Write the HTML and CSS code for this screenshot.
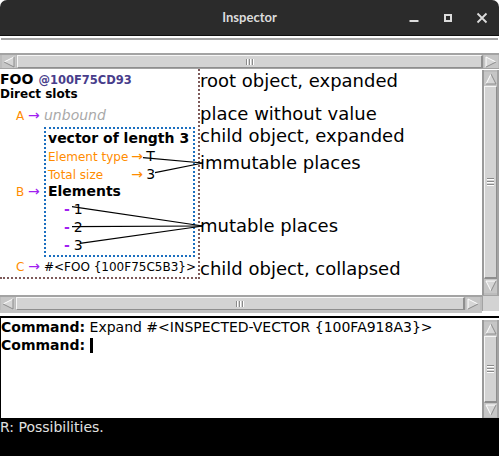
FILE: index.html
```html
<!DOCTYPE html>
<html>
<head>
<meta charset="utf-8">
<title>Inspector</title>
<link rel="stylesheet" href="styles.css">
</head>
<body>
<div class="window">
  <div class="titlebar">
    <div></div>
    <div class="title">Inspector</div>
    <div class="controls">
      <span class="wbtn"><svg width="12" height="12" viewBox="0 0 12 12"><rect x="1.5" y="8" width="9" height="2" fill="#dcdcdc"/></svg></span>
      <span class="wbtn"><svg width="12" height="12" viewBox="0 0 12 12"><rect x="3" y="3" width="6" height="6" fill="none" stroke="#dcdcdc" stroke-width="2"/></svg></span>
      <span class="wbtn"><svg width="12" height="12" viewBox="0 0 12 12"><path d="M1.5 1.5 L10.5 10.5 M10.5 1.5 L1.5 10.5" stroke="#dcdcdc" stroke-width="1.8"/></svg></span>
    </div>
  </div>

  <div class="topline"></div>

  <div class="hscroll hscroll-top">
    <div class="harrow"><svg width="12" height="12" viewBox="0 0 12 12"><polygon points="1,6 11,1 11,11" fill="#d6d6d6"/><path d="M1 6 L11 1" stroke="#fff"/><path d="M11 1 L11 11 L1 6" stroke="#8c8c8c" fill="none"/></svg></div>
    <div class="hthumb"><span class="grip-v"></span></div>
    <div class="harrow"><svg width="12" height="12" viewBox="0 0 12 12"><polygon points="11,6 1,1 1,11" fill="#d6d6d6"/><path d="M1 11 L1 1 L11 6" stroke="#fff" fill="none"/><path d="M11 6 L1 11" stroke="#8c8c8c"/></svg></div>
  </div>

  <div class="pane">
    <div class="canvas">
      <div class="root">
        <div class="obj-head"><span class="type">FOO</span> <span class="addr">@100F75CD93</span></div>
        <div class="section">Direct slots</div>
        <div class="slot slot-a">
          <span class="key">A <span class="arr">→</span></span>
          <span class="unbound">unbound</span>
        </div>
        <div class="slot slot-b">
          <span class="key">B <span class="arr">→</span></span>
          <div class="child">
            <div class="child-head">vector of length 3</div>
            <div class="props">
              <span class="pkey">Element type</span><span class="parr">→</span><span class="pval">T</span>
              <span class="pkey">Total size</span><span class="parr">→</span><span class="pval">3</span>
            </div>
            <div class="child-section">Elements</div>
            <div class="elem"><span class="dash">-</span><span class="ev">1</span></div>
            <div class="elem"><span class="dash">-</span><span class="ev">2</span></div>
            <div class="elem"><span class="dash">-</span><span class="ev">3</span></div>
          </div>
        </div>
        <div class="slot slot-c">
          <span class="key">C <span class="arr">→</span></span>
          <span class="collapsed">#&lt;FOO {100F75C5B3}&gt;</span>
        </div>
      </div>

      <div class="notes">
        <div class="note n1">root object, expanded</div>
        <div class="note n2">place without value</div>
        <div class="note n3">child object, expanded</div>
        <div class="note n4">immutable places</div>
        <div class="note n5">mutable places</div>
        <div class="note n6">child object, collapsed</div>
      </div>

      <svg class="leaders" width="482" height="226" viewBox="0 0 482 226">
        <g stroke="#000" stroke-width="1.2" fill="none">
          <line x1="143" y1="88.7" x2="203" y2="94"/>
          <line x1="155" y1="103.7" x2="203" y2="94"/>
          <line x1="72" y1="137.7" x2="203" y2="157"/>
          <line x1="72" y1="157.7" x2="203" y2="157"/>
          <line x1="80" y1="174.3" x2="203" y2="157"/>
        </g>
      </svg>
    </div>

    <div class="vscroll vscroll-top">
      <div class="varrow"><svg width="12" height="12" viewBox="0 0 12 12"><polygon points="6,1 11,11 1,11" fill="#d6d6d6"/><path d="M1 11 L6 1" stroke="#fff"/><path d="M6 1 L11 11 L1 11" stroke="#8c8c8c" fill="none"/></svg></div>
      <div class="vthumb"><span class="grip-h"></span></div>
      <div class="varrow"><svg width="12" height="12" viewBox="0 0 12 12"><polygon points="6,11 11,1 1,1" fill="#d6d6d6"/><path d="M6 11 L1 1 L11 1" stroke="#fff" fill="none"/><path d="M11 1 L6 11" stroke="#8c8c8c"/></svg></div>
    </div>
  </div>

  <div class="hrow">
    <div class="hscroll hscroll-bottom">
      <div class="harrow"><svg width="12" height="12" viewBox="0 0 12 12"><polygon points="1,6 11,1 11,11" fill="#d6d6d6"/><path d="M1 6 L11 1" stroke="#fff"/><path d="M11 1 L11 11 L1 6" stroke="#8c8c8c" fill="none"/></svg></div>
      <div class="hthumb"><span class="grip-v"></span></div>
      <div class="harrow"><svg width="12" height="12" viewBox="0 0 12 12"><polygon points="11,6 1,1 1,11" fill="#d6d6d6"/><path d="M1 11 L1 1 L11 6" stroke="#fff" fill="none"/><path d="M11 6 L1 11" stroke="#8c8c8c"/></svg></div>
    </div>
    <div class="corner"></div>
  </div>

  <div class="cmd">
    <div class="cmd-text">
      <div class="cmd-line"><b>Command:</b> Expand #&lt;INSPECTED-VECTOR {100FA918A3}&gt;</div>
      <div class="cmd-line"><b>Command:</b> <span class="cursor"></span></div>
    </div>
    <div class="vscroll vscroll-cmd">
      <div class="varrow"><svg width="12" height="12" viewBox="0 0 12 12"><polygon points="6,1 11,11 1,11" fill="#d6d6d6"/><path d="M1 11 L6 1" stroke="#fff"/><path d="M6 1 L11 11 L1 11" stroke="#8c8c8c" fill="none"/></svg></div>
      <div class="vthumb"><span class="grip-h"></span></div>
      <div class="varrow"><svg width="12" height="12" viewBox="0 0 12 12"><polygon points="6,11 11,1 1,1" fill="#d6d6d6"/><path d="M6 11 L1 1 L11 1" stroke="#fff" fill="none"/><path d="M11 1 L6 11" stroke="#8c8c8c"/></svg></div>
    </div>
  </div>

  <div class="status">R: Possibilities.</div>
</div>
</body>
</html>
```

FILE: styles.css
```css
html, body {
  margin: 0;
  padding: 0;
}
body {
  width: 499px;
  height: 456px;
  overflow: hidden;
  background: #ffffff;
  font-family: "DejaVu Sans", sans-serif;
  color: #000;
}
.window {
  width: 499px;
  height: 456px;
  display: flex;
  flex-direction: column;
}

/* title bar */
.titlebar {
  height: 36px;
  flex: none;
  box-sizing: border-box;
  background: #2b2b2b;
  border-bottom: 1px solid #111;
  border-radius: 7px 7px 0 0;
  display: grid;
  grid-template-columns: 1fr auto 1fr;
  align-items: center;
}
.title {
  font-family: Lato, "DejaVu Sans", sans-serif;
  font-weight: 700;
  font-size: 13px;
  color: #dcdcdc;
  padding-bottom: 1px;
}
.controls {
  justify-self: end;
  display: flex;
  padding-right: 0.5px;
}
.wbtn {
  width: 34px;
  height: 34px;
  display: flex;
  align-items: center;
  justify-content: center;
}

.topline {
  flex: none;
  height: 2px;
  background: #a3a3a3;
  margin: 2px 1px 13px 1px;
}

/* horizontal scrollbars */
.hscroll {
  flex: none;
  display: flex;
  height: 16px;
  box-sizing: border-box;
  background: #bcbcbc;
  border-top: 2px solid #a3a3a3;
  border-bottom: 1px solid #a3a3a3;
}
.hscroll-top {
  padding: 0 1px 0 2px;
}
.hscroll-bottom {
  width: 482px;
  height: 18px;
  border-bottom: 3px solid #c4c4c4;
  padding: 0 2px 0 1px;
}
.harrow {
  width: 14px;
  flex: none;
  display: flex;
  align-items: center;
  justify-content: center;
  background: #c6c6c6;
}
.hthumb {
  flex: 1;
  margin: 0 1px;
  background: #d3d3d3;
  border-top: 1px solid #f6f6f6;
  border-left: 1px solid #f6f6f6;
  border-right: 2px solid #8e8e8e;
  border-bottom: 1px solid #8e8e8e;
  display: flex;
  align-items: center;
  justify-content: center;
}
.grip-v {
  width: 8px;
  height: 6px;
  background: repeating-linear-gradient(90deg, #8a8a8a 0 1px, #ffffff 1px 2px, transparent 2px 3px);
}

/* top pane */
.pane {
  flex: none;
  height: 226px;
  display: flex;
}
.canvas {
  flex: 1;
  position: relative;
  display: flex;
  align-items: flex-start;
  overflow: hidden;
}
.root {
  width: 200px;
  flex: none;
  box-sizing: border-box;
  border-right: 2px dotted #7d5a5a;
  border-bottom: 2px dotted #7d5a5a;
  padding: 1px 0 3px 0;
}
.obj-head {
  line-height: 17px;
  height: 17px;
  white-space: nowrap;
}
.type {
  font-weight: 700;
  font-size: 14px;
}
.addr {
  font-weight: 700;
  font-size: 11.5px;
  color: #483d8b;
}
.section {
  font-weight: 700;
  font-size: 12px;
  line-height: 15px;
  height: 15px;
}
.slot {
  display: flex;
  padding-left: 16px;
  white-space: nowrap;
}
.key {
  width: 28px;
  flex: none;
  font-size: 12px;
  color: #ff8c00;
}
.arr {
  color: #a020f0;
  font-size: 14px;
}
.slot-a {
  margin-top: 4px;
  height: 18px;
  line-height: 18px;
  align-items: baseline;
}
.unbound {
  font-size: 14px;
  font-style: italic;
  color: #a9a9a9;
}
.slot-b {
  margin-top: 3px;
  align-items: center;
}
.slot-b .key {
  line-height: 17px;
}
.child {
  width: 151px;
  box-sizing: border-box;
  border: 2px dotted #1c6fbf;
  padding: 0 0 1px 2px;
}
.child-head {
  font-weight: 700;
  font-size: 14px;
  line-height: 18px;
  height: 18px;
}
.props {
  display: grid;
  grid-template-columns: max-content 12px max-content;
  grid-auto-rows: 18px;
  column-gap: 3px;
  align-items: baseline;
  line-height: 18px;
}
.pkey {
  font-size: 12px;
  color: #ff8c00;
}
.parr {
  font-size: 14px;
  color: #ff8c00;
}
.pval {
  font-size: 14px;
}
.child-section {
  font-weight: 700;
  font-size: 14px;
  line-height: 17px;
  height: 17px;
}
.elem {
  height: 18px;
  line-height: 18px;
  font-size: 14px;
  padding-left: 16px;
  display: flex;
}
.dash {
  color: #a020f0;
  font-weight: 700;
  margin-right: 4px;
}
.slot-c {
  margin-top: 1px;
  height: 16px;
  line-height: 16px;
  align-items: baseline;
}
.collapsed {
  font-size: 12px;
}

/* annotations */
.notes {
  flex: none;
  font-size: 18px;
  line-height: 21px;
  white-space: nowrap;
}
.note {
  height: 21px;
}
.n1 { margin-top: 1px; }
.n2 { margin-top: 12px; }
.n3 { margin-top: 1px; }
.n4 { margin-top: 6px; }
.n5 { margin-top: 42px; }
.n6 { margin-top: 22px; }

.leaders {
  position: absolute;
  left: 0;
  top: 0;
  pointer-events: none;
}

/* vertical scrollbars */
.vscroll {
  width: 17px;
  flex: none;
  box-sizing: border-box;
  background: #bcbcbc;
  border-left: 2px solid #9a9a9a;
  border-right: 2px solid #a3a3a3;
  display: flex;
  flex-direction: column;
  padding: 2px 0 2px 0;
}
.vscroll-top {
  margin-top: 1px;
}
.vscroll-cmd {
  margin-top: 2px;
  padding-bottom: 1px;
}
.varrow {
  height: 14px;
  flex: none;
  display: flex;
  align-items: center;
  justify-content: center;
  background: #c6c6c6;
}
.vthumb {
  flex: 1;
  background: #d3d3d3;
  border-top: 1px solid #f6f6f6;
  border-left: 1px solid #f6f6f6;
  border-right: 1px solid #8e8e8e;
  border-bottom: 2px solid #8e8e8e;
  display: flex;
  align-items: center;
  justify-content: center;
}
.grip-h {
  width: 7px;
  height: 8px;
  background: repeating-linear-gradient(180deg, #8a8a8a 0 1px, #ffffff 1px 2px, transparent 2px 3px);
}

.hrow {
  flex: none;
  display: flex;
  height: 18px;
}
.corner {
  width: 17px;
  height: 16px;
  box-sizing: border-box;
  background: #d3d3d3;
  border-top: 1px solid #a3a3a3;
  border-left: 1px solid #a3a3a3;
}

/* command pane */
.cmd {
  flex: none;
  margin-top: 3px;
  height: 102px;
  box-sizing: border-box;
  border-top: 2px solid #000;
  border-left: 1px solid #000;
  display: flex;
}
.cmd-text {
  flex: 1;
  font-size: 14px;
  line-height: 18px;
  white-space: nowrap;
}
.cmd-line {
  height: 18px;
}
.cursor {
  display: inline-block;
  width: 3px;
  height: 15px;
  background: #000;
  vertical-align: -3px;
}

/* status line */
.status {
  flex: 1;
  background: #000;
  color: #e0e0e0;
  font-size: 14px;
  line-height: 18px;
}
```
